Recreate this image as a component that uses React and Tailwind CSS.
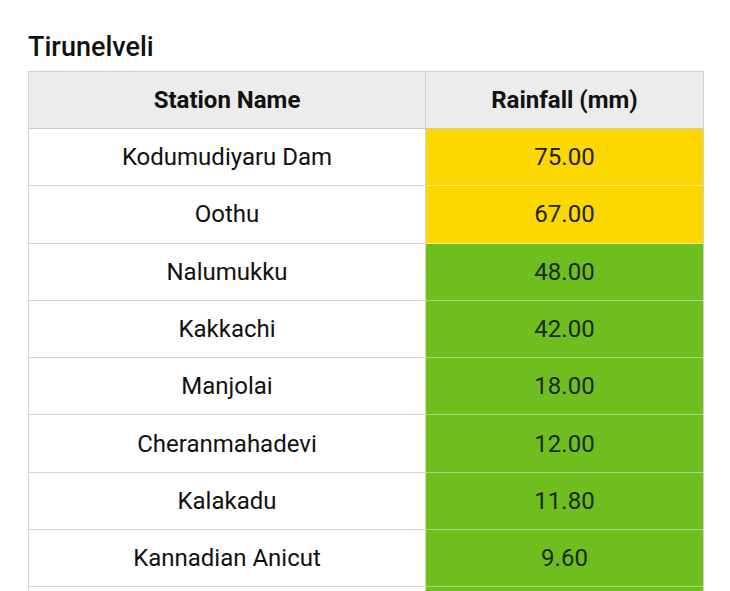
import React from "react";

const rows = [
  { name: "Kodumudiyaru Dam", rain: "75.00", level: "high" },
  { name: "Oothu", rain: "67.00", level: "high" },
  { name: "Nalumukku", rain: "48.00", level: "low" },
  { name: "Kakkachi", rain: "42.00", level: "low" },
  { name: "Manjolai", rain: "18.00", level: "low" },
  { name: "Cheranmahadevi", rain: "12.00", level: "low" },
  { name: "Kalakadu", rain: "11.80", level: "low" },
  { name: "Kannadian Anicut", rain: "9.60", level: "low" },
  // next row is cut by the bottom edge, only its top border shows
  { name: "", rain: "", level: "low" },
];

export default function App() {
  return (
    <div className="w-[730px] h-[591px] overflow-hidden bg-white pl-[28px] pt-[30px] font-['Roboto',sans-serif]">
      {/* District title */}
      <h1 className="text-[27px] leading-[34px] font-medium text-[#111] mb-[7px]">
        Tirunelveli
      </h1>

      {/* Rainfall table */}
      <div className="w-[676px] border-l border-r border-t border-[#cfcfcf]">
        <div className="flex h-[57px] bg-[#ececec] border-b border-[#c9c9c9]">
          <div className="w-[397px] flex items-center justify-center border-r border-[#cfcfcf] text-[24px] font-bold text-[#111]">
            Station Name
          </div>
          <div className="flex-1 flex items-center justify-center text-[24px] font-bold text-[#111]">
            Rainfall (mm)
          </div>
        </div>

        {rows.map((row, i) => (
          <div key={i} className="flex h-[57.3px]">
            <div className="w-[397px] flex items-center justify-center border-r border-b border-[#d4d4d4] text-[24px] text-[#111]">
              {row.name}
            </div>
            <div
              className={
                row.level === "high"
                  ? "flex-1 flex items-center justify-center bg-[#fcd700] border-b border-[#f7e58a] text-[24px] text-[#222]"
                  : "flex-1 flex items-center justify-center bg-[#6dbe1e] border-b border-[#a6d97a] text-[24px] text-[#1d2a10]"
              }
            >
              {row.rain}
            </div>
          </div>
        ))}
      </div>
    </div>
  );
}
